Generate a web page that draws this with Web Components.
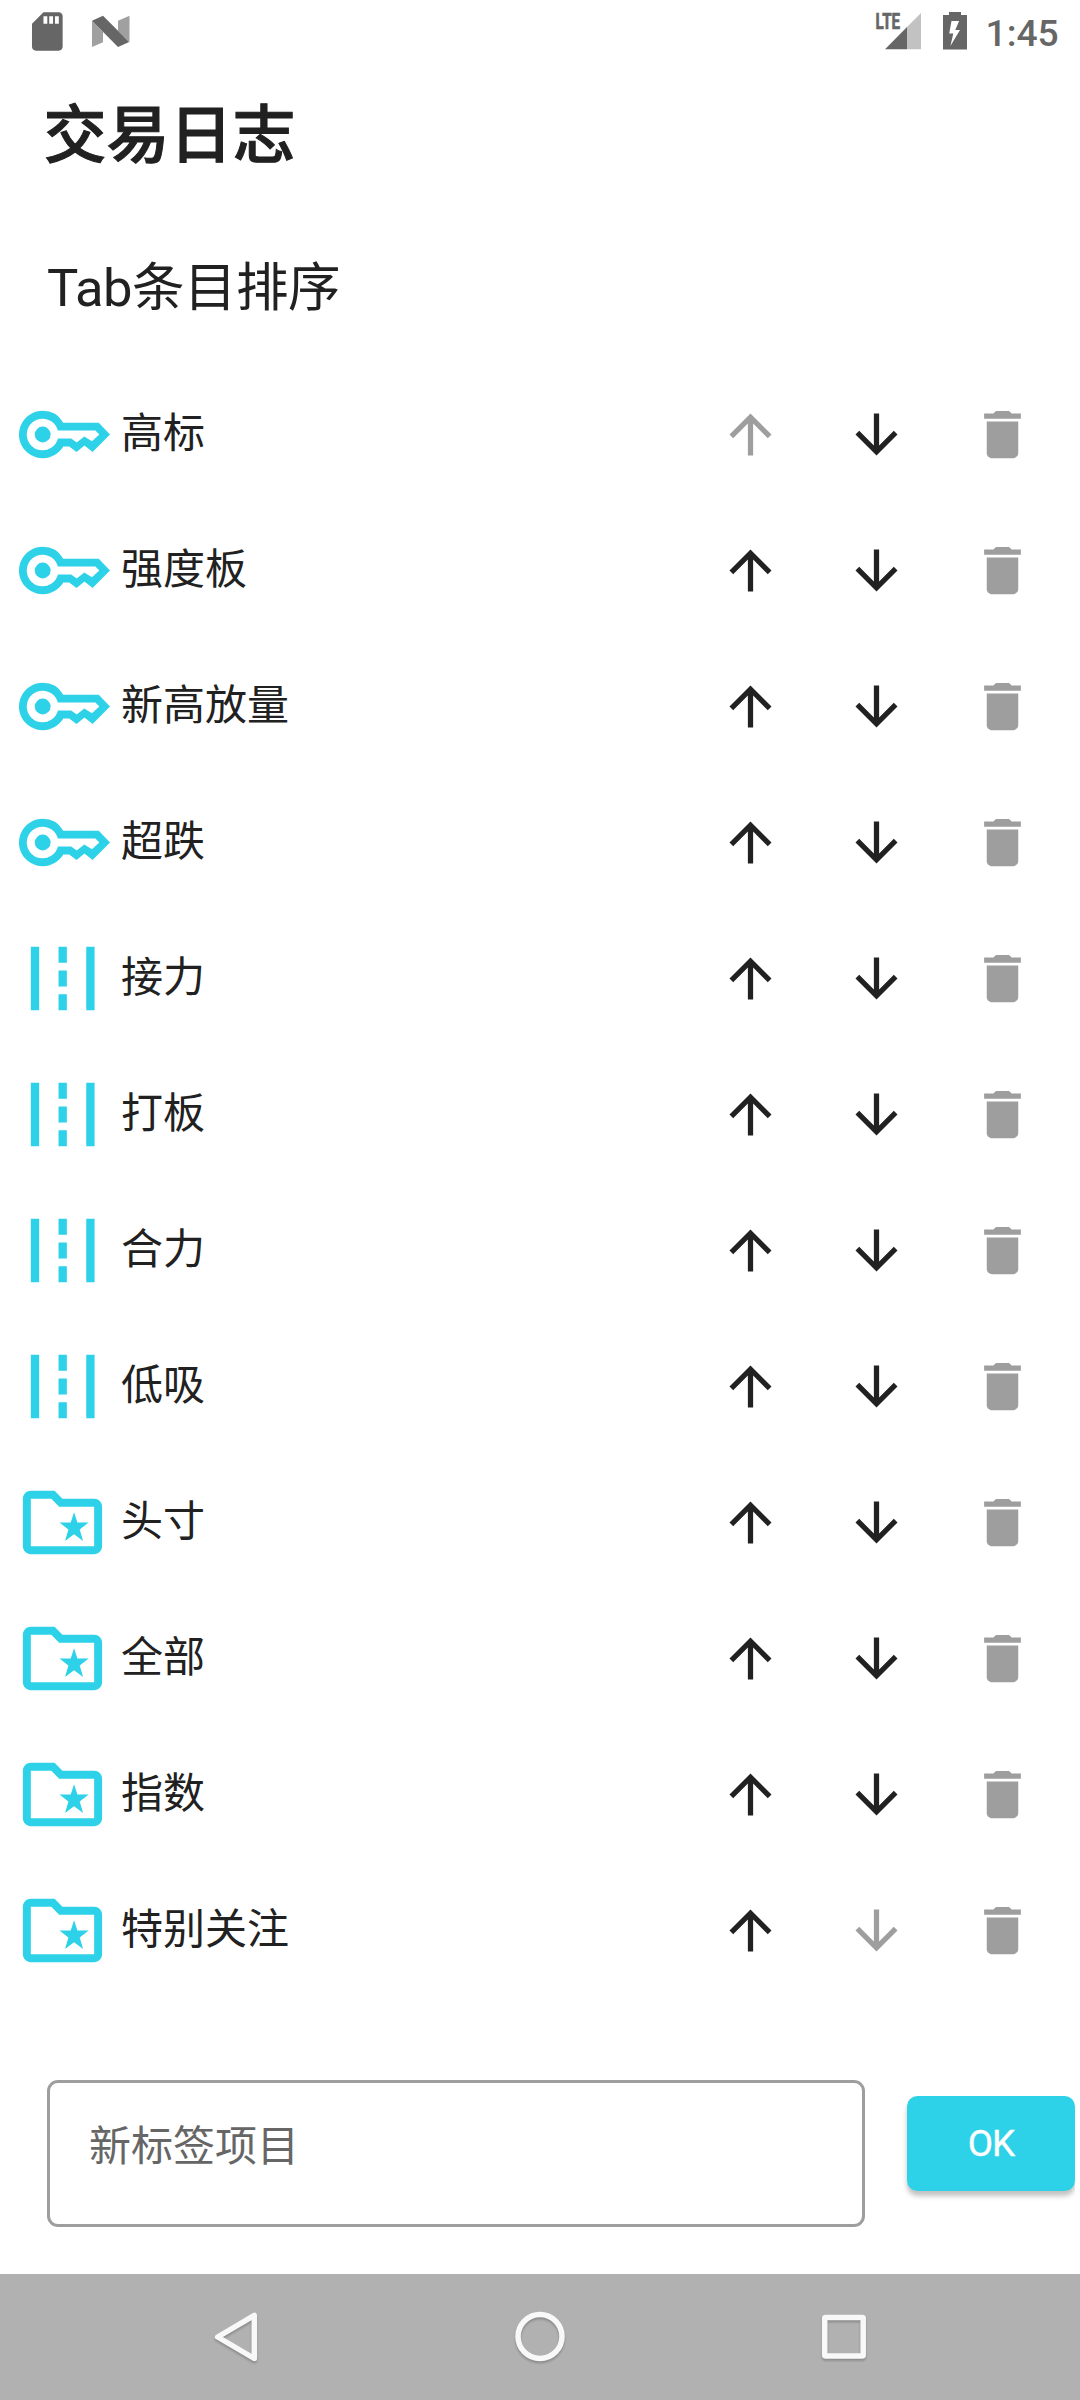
<!DOCTYPE html>
<html lang="zh-CN">
<head>
<meta charset="utf-8">
<title>交易日志</title>
<style>
  html, body { margin: 0; padding: 0; }
  body {
    width: 1080px;
    height: 2400px;
    overflow: hidden;
    background: #fff;
    color: #212121;
    font-family: Roboto, "Noto Sans CJK SC", sans-serif;
    --accent: #2dd2e8;
    --disabled: #9e9e9e;
    --status: #666;
  }
</style>
</head>
<body>
<journal-app></journal-app>

<script>
  const define = (name, html, setup) => {
    const template = document.createElement('template');
    template.innerHTML = html;
    customElements.define(name, class extends HTMLElement {
      constructor() {
        super();
        this.attachShadow({ mode: 'open' });
        this.shadowRoot.appendChild(template.content.cloneNode(true));
      }

      connectedCallback() {
        if (setup) setup(this, this.shadowRoot);
      }
    });
  };

  // 24x24 icon paths
  const ICONS = {
    key: 'M7 6a6 6 0 1 0 5.2 9h1.5l1.85 1.4 2-1.6 2.05 1.65L24 12l-2.85-3H12.2A6 6 0 0 0 7 6zM7 8c1.85 0 3.4 1.25 3.85 3h9.45l1 1-1.85 1.7-1.95-1.2-1.9 1.5L14.2 13h-3.35A4 4 0 1 1 7 8zM7 10a2 2 0 1 0 0 4 2 2 0 0 0 0-4z',
    road: 'M4 4h2.1v16H4zM18 4h2.1v16H18zM11 4h2.1v4H11zM11 10h2.1v4H11zM11 16h2.1v4H11z',
    folder: 'M20 6h-8l-2-2H4c-1.1 0-2 .9-2 2v12c0 1.1.9 2 2 2h16c1.1 0 2-.9 2-2V8c0-1.1-.9-2-2-2zm0 12H4V6h5.17l2 2H20v10zM14.92 9.4l.84 2.6h2.84l-2.25 1.75.85 2.95-2.28-1.75-2.28 1.75.85-2.95L11.25 12h2.83z',
    up: 'M4 12l1.41 1.41L11 7.83V20h2V7.83l5.58 5.59L20 12l-8-8-8 8z',
    down: 'M20 12l-1.41-1.41L13 16.17V4h-2v12.17l-5.58-5.59L4 12l8 8 8-8z',
    trash: 'M6 19c0 1.1.9 2 2 2h8c1.1 0 2-.9 2-2V7H6v12zM19 4h-3.5l-1-1h-5l-1 1H5v2h14V4z'
  };

  define('app-icon', `
    <style>
      :host { display: block; width: 63px; height: 63px; }
      svg { display: block; width: 100%; height: 100%; fill: currentColor; fill-rule: evenodd; }
    </style>
    <svg viewBox="0 0 24 24"><path/></svg>
  `, (el, root) => {
    root.querySelector('path').setAttribute('d', ICONS[el.getAttribute('name')]);
  });

  define('status-bar', `
    <style>
      :host { display: block; height: 63px; color: var(--status); }
      svg { display: block; }
      text { font-family: Roboto, sans-serif; fill: currentColor; }
    </style>
    <svg width="1080" height="63" fill="currentColor">
      <path transform="translate(24.3 8.5) scale(1.917)" d="M18 2h-8L4.02 8 4 20c0 1.1.9 2 2 2h12c1.1 0 2-.9 2-2V4c0-1.1-.9-2-2-2zm-6 6h-2V4h2v4zm3 0h-2V4h2v4zm3 0h-2V4h2v4z"/>
      <path fill="#a0a0a0" d="M92 20.7L103 32v10.3L92 47zM118 20.7l11.5-4.9V42L118 31z"/>
      <path d="M92 20.7l11-4.9L129.2 42 118 47z"/>
      <text x="875.6" y="29" font-size="22" font-weight="700" textLength="24.5" lengthAdjust="spacingAndGlyphs" stroke="currentColor" stroke-width=".7">LTE</text>
      <path fill="#c2c2c2" d="M907 27l14-14v36.3h-14z"/>
      <path d="M885 49.3L907 27v22.3z"/>
      <path fill-rule="evenodd" d="M949 12h12v3h6v34.5h-24V15h6zM951.5 21l-2.3 12.5h4.1L950.4 46l9.6-16h-4.7l3.8-9z"/>
      <text x="985.5" y="46.2" font-size="37.2" font-weight="500">1:45</text>
    </svg>
  `);

  define('page-heading', `
    <style>
      :host { display: block; height: 303px; }
      h1, h2 { margin: 0; white-space: nowrap; }
      h1 { padding: 28px 0 0 43.5px; font-size: 63px; line-height: 90px; font-weight: 500; -webkit-text-stroke: 1px currentColor; }
      h2 { padding: 67px 0 0 47px; font-size: 52.5px; line-height: 80px; font-weight: 400; letter-spacing: -.5px; }
    </style>
    <h1><slot name="title"></slot></h1>
    <h2><slot></slot></h2>
  `);

  define('sort-row', `
    <style>
      :host { display: flex; align-items: center; height: 136px; }
      .kind { width: 95px; height: 95px; margin-left: 15px; color: var(--accent); }
      .label { flex: 1; padding: 0 0 1px 11px; font-size: 42px; line-height: 60px; }
      .actions { display: flex; margin-right: 14.5px; }
      button {
        display: flex;
        align-items: center;
        justify-content: center;
        width: 126px;
        height: 126px;
        padding: 0;
        border: 0;
        background: none;
        color: inherit;
      }
      button:disabled { color: var(--disabled); }
    </style>
    <app-icon class="kind"></app-icon>
    <div class="label"><slot></slot></div>
    <div class="actions">
      <button class="up"><app-icon name="up"></app-icon></button>
      <button class="down"><app-icon name="down"></app-icon></button>
      <button disabled><app-icon name="trash"></app-icon></button>
    </div>
  `, (el, root) => {
    const icon = root.querySelector('.kind');
    icon.setAttribute('name', el.getAttribute('icon'));
    icon.shadowRoot.querySelector('path').setAttribute('d', ICONS[el.getAttribute('icon')]);
    root.querySelector('.up').disabled = el.hasAttribute('first');
    root.querySelector('.down').disabled = el.hasAttribute('last');
  });

  define('new-tab-form', `
    <style>
      :host { display: flex; align-items: flex-start; padding: 82px 5px 0 47px; box-sizing: border-box; overflow: hidden; }
      .field {
        box-sizing: border-box;
        width: 818px;
        height: 147px;
        padding: 34px 39px;
        border: 3px solid #9e9e9e;
        border-radius: 11px;
        color: #666;
        font-size: 42px;
        line-height: 60px;
      }
      /* the button's shadow is cut at the right edge */
      .clip { width: 168px; height: 120px; padding: 16px 0 0 42px; overflow: hidden; }
      button {
        display: block;
        width: 168px;
        height: 95px;
        padding: 0;
        border: 0;
        border-radius: 10.5px;
        background: var(--accent);
        color: #fff;
        font: 400 36.75px/95px Roboto, sans-serif;
        letter-spacing: -.8px;
        -webkit-text-stroke: .4px #fff;
        box-shadow: 0 5px 5px rgba(0, 0, 0, .24);
      }
    </style>
    <div class="field"><slot></slot></div>
    <div class="clip"><button>OK</button></div>
  `);

  define('nav-bar', `
    <style>
      :host { display: block; height: 126px; background: #b1b1b1; }
      svg { display: block; filter: drop-shadow(0 2px 1px rgba(0, 0, 0, .22)); }
    </style>
    <svg width="1080" height="126" fill="none" stroke="#f8f8f8" stroke-width="5.5" stroke-linejoin="round">
      <path d="M254.3 41.3v43.2L217.7 63z"/>
      <circle cx="540" cy="62.5" r="22"/>
      <rect x="824.7" y="43.5" width="38.5" height="38.5" rx="1"/>
    </svg>
  `);

  define('journal-app', `
    <style>
      :host { display: flex; flex-direction: column; width: 1080px; height: 2400px; }
      new-tab-form { margin-top: auto; height: 276px; }
    </style>
    <status-bar></status-bar>
    <page-heading><span slot="title">交易日志</span>Tab条目排序</page-heading>
    <main>
      <sort-row icon="key" first>高标</sort-row>
      <sort-row icon="key">强度板</sort-row>
      <sort-row icon="key">新高放量</sort-row>
      <sort-row icon="key">超跌</sort-row>
      <sort-row icon="road">接力</sort-row>
      <sort-row icon="road">打板</sort-row>
      <sort-row icon="road">合力</sort-row>
      <sort-row icon="road">低吸</sort-row>
      <sort-row icon="folder">头寸</sort-row>
      <sort-row icon="folder">全部</sort-row>
      <sort-row icon="folder">指数</sort-row>
      <sort-row icon="folder" last>特别关注</sort-row>
    </main>
    <new-tab-form>新标签项目</new-tab-form>
    <nav-bar></nav-bar>
  `);
</script>
</body>
</html>
